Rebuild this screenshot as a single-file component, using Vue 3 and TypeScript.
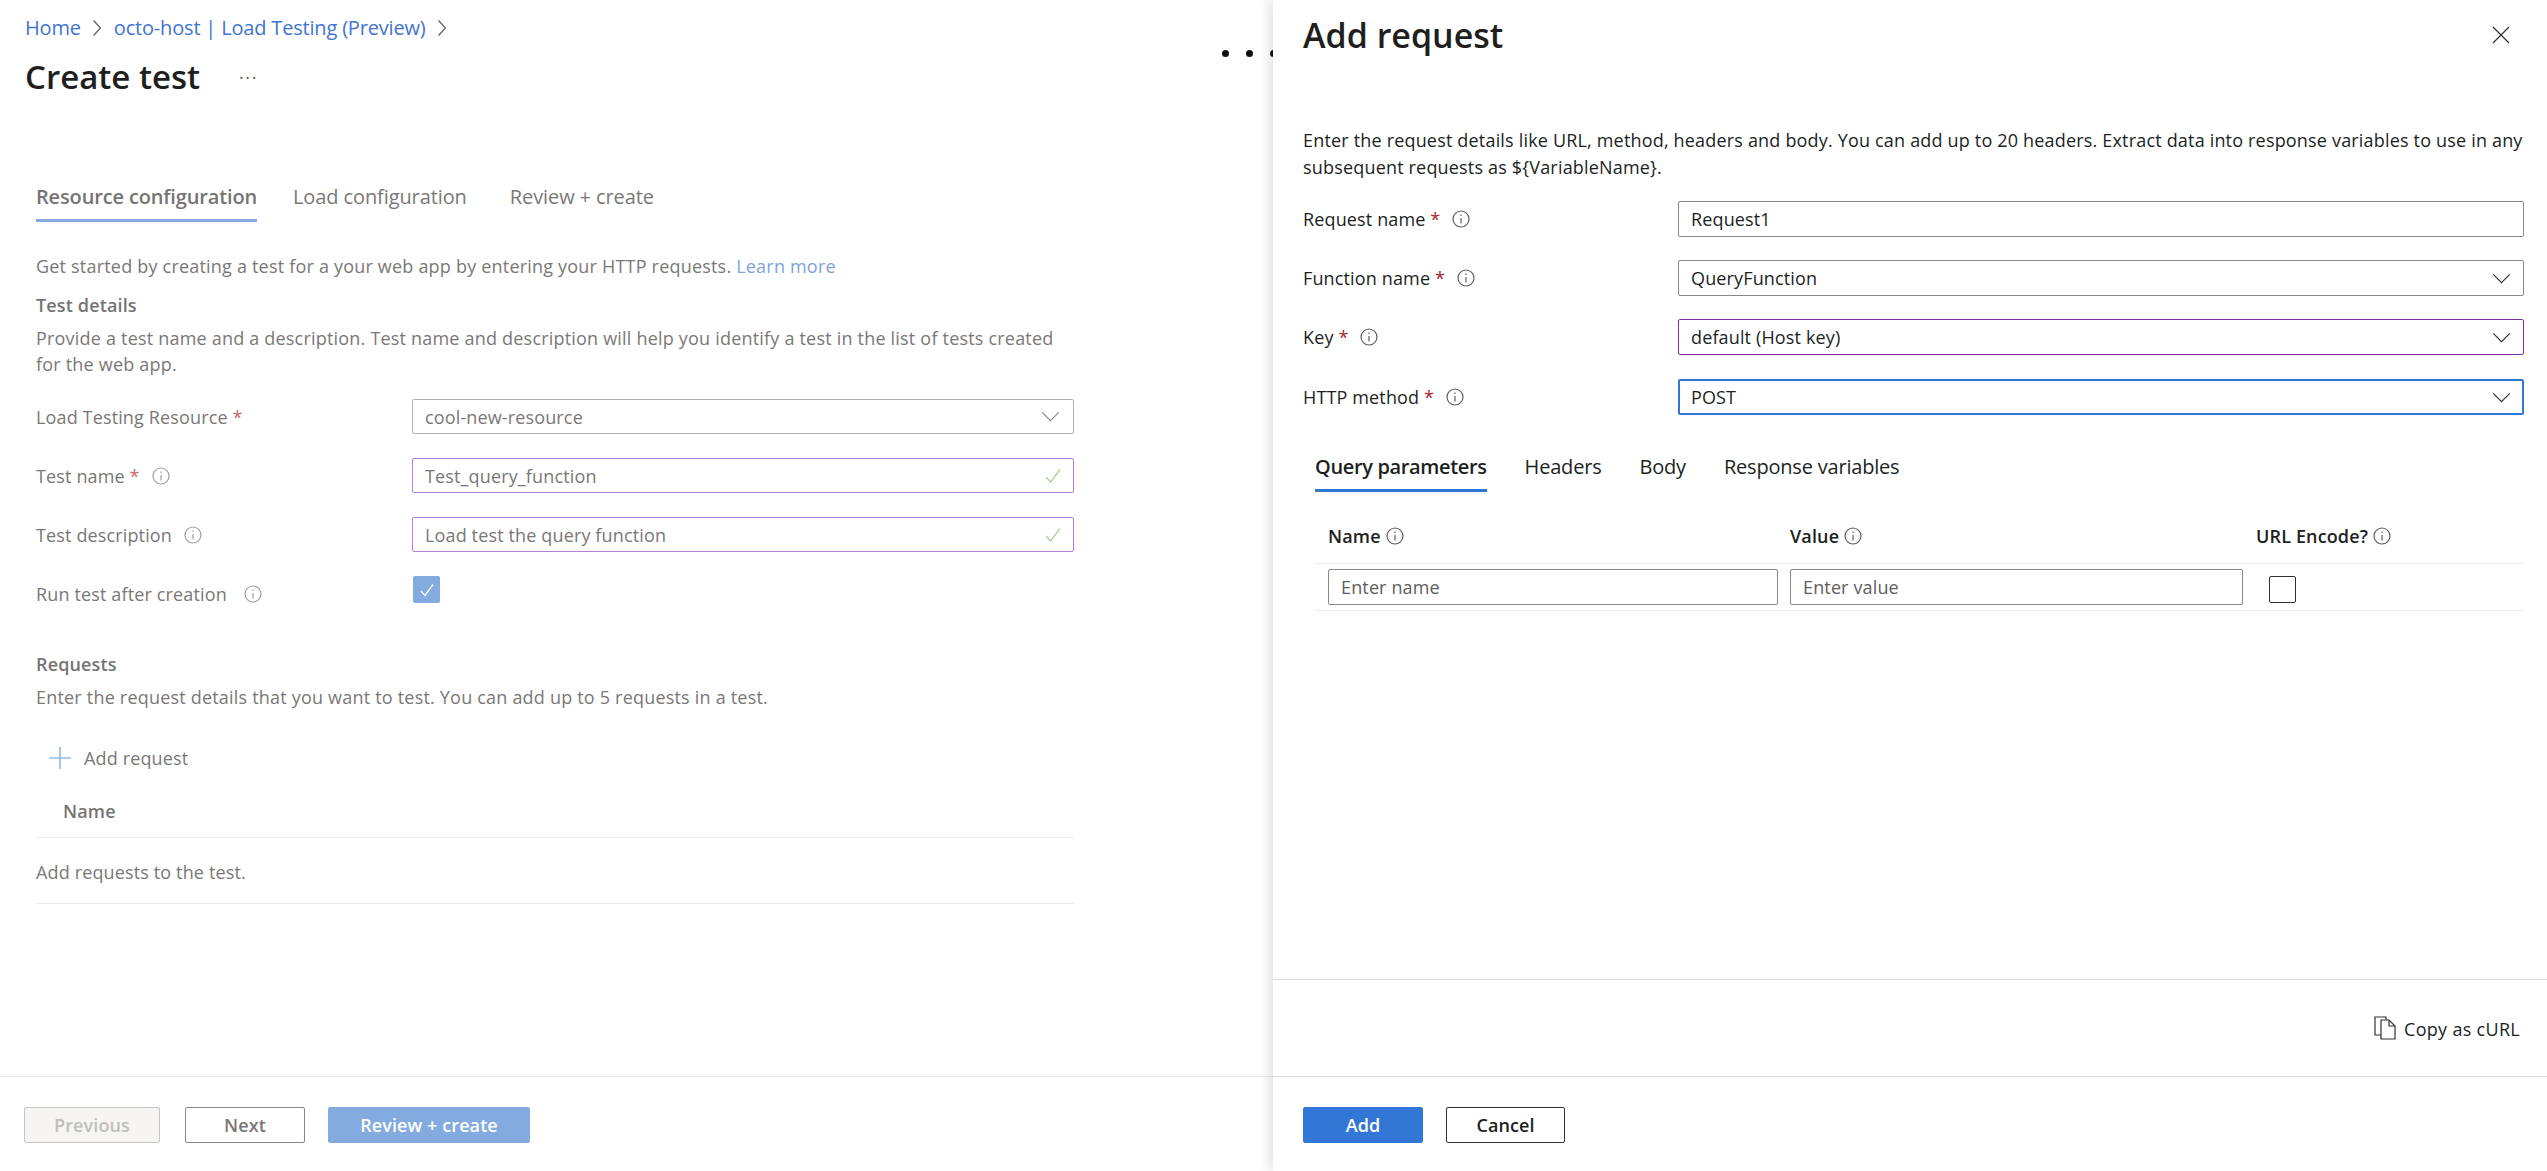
<script setup lang="ts">
interface LeftField { label: string; required?: boolean; info?: boolean; value: string; kind: 'select' | 'valid' }
interface RightField { label: string; value: string; state: string; select: boolean }

const leftFields: LeftField[] = [
  { label: 'Load Testing Resource', required: true, value: 'cool-new-resource', kind: 'select' },
  { label: 'Test name', required: true, info: true, value: 'Test_query_function', kind: 'valid' },
  { label: 'Test description', info: true, value: 'Load test the query function', kind: 'valid' },
]
const rightFields: RightField[] = [
  { label: 'Request name', value: 'Request1', state: '', select: false },
  { label: 'Function name', value: 'QueryFunction', state: '', select: true },
  { label: 'Key', value: 'default (Host key)', state: 'dirty', select: true },
  { label: 'HTTP method', value: 'POST', state: 'focus', select: true },
]
const subTabs = ['Headers', 'Body', 'Response variables']
</script>

<template>
  <div class="page">
    <section class="left">
      <nav class="crumbs">
        <a>Home</a>
        <svg class="crumb-chev" viewBox="0 0 10 18"><path d="M1.5 1.5 8.5 9l-7 7.5" /></svg>
        <a>octo-host | Load Testing (Preview)</a>
        <svg class="crumb-chev" viewBox="0 0 10 18"><path d="M1.5 1.5 8.5 9l-7 7.5" /></svg>
      </nav>
      <div class="title-row">
        <h1>Create test</h1>
        <span class="title-more">···</span>
      </div>
      <div class="left-tabs">
        <span class="ltab active">Resource configuration</span>
        <span class="ltab">Load configuration</span>
        <span class="ltab">Review + create</span>
      </div>
      <div class="left-body">
        <p class="intro">Get started by creating a test for a your web app by entering your HTTP requests. <a>Learn more</a></p>
        <h2 class="details-head">Test details</h2>
        <p class="desc">Provide a test name and a description. Test name and description will help you identify a test in the list of tests created<br />for the web app.</p>
        <div class="left-form">
          <div v-for="f in leftFields" :key="f.label" class="lrow">
            <label>{{ f.label }}<em v-if="f.required"> *</em>
              <svg v-if="f.info" class="info light" viewBox="0 0 18 18"><circle cx="9" cy="9" r="8" /><path d="M9 8v5.5M9 4.6v1.4" /></svg>
            </label>
            <div class="lbox" :class="f.kind">
              <span>{{ f.value }}</span>
              <svg v-if="f.kind === 'select'" class="chev" viewBox="0 0 20 12"><path d="M1 1.5 10 10.5l9-9" /></svg>
              <svg v-else class="tick" viewBox="0 0 20 20"><path d="M1.5 11.5 7 17.5 18.5 2" /></svg>
            </div>
          </div>
          <div class="lrow">
            <label>Run test after creation
              <svg class="info light" viewBox="0 0 18 18"><circle cx="9" cy="9" r="8" /><path d="M9 8v5.5M9 4.6v1.4" /></svg>
            </label>
            <span class="lcheck"><svg viewBox="0 0 18 18"><path d="M3 10l4 4.5L15 3.5" /></svg></span>
          </div>
        </div>
        <h2 class="req-head">Requests</h2>
        <p class="req-desc">Enter the request details that you want to test. You can add up to 5 requests in a test.</p>
        <div class="add-req">
          <svg viewBox="0 0 24 24"><path d="M12 1v22M1 12h22" /></svg>
          <span>Add request</span>
        </div>
        <div class="req-col">Name</div>
        <div class="req-empty">Add requests to the test.</div>
      </div>
      <footer class="left-foot">
        <button class="btn prev">Previous</button>
        <button class="btn next">Next</button>
        <button class="btn review">Review + create</button>
      </footer>
      <span class="dots" aria-hidden="true"><i></i><i></i><i></i></span>
    </section>

    <aside class="panel">
      <header class="panel-head">
        <h1>Add request</h1>
        <svg class="close" viewBox="0 0 18 18"><path d="M1 1l16 16M17 1 1 17" /></svg>
      </header>
      <p class="panel-intro">Enter the request details like URL, method, headers and body. You can add up to 20 headers. Extract data into response variables to use in any<br />subsequent requests as ${VariableName}.</p>
      <div class="panel-form">
        <div v-for="f in rightFields" :key="f.label" class="rrow">
          <label>{{ f.label }}<em> *</em>
            <svg class="info" viewBox="0 0 18 18"><circle cx="9" cy="9" r="8" /><path d="M9 8v5.5M9 4.6v1.4" /></svg>
          </label>
          <div class="rbox" :class="f.state">
            <span>{{ f.value }}</span>
            <svg v-if="f.select" class="chev dark" viewBox="0 0 20 12"><path d="M1 1.5 10 10.5l9-9" /></svg>
          </div>
        </div>
      </div>
      <div class="sub-tabs">
        <span class="stab active">Query parameters</span>
        <span v-for="t in subTabs" :key="t" class="stab">{{ t }}</span>
      </div>
      <div class="grid-head">
        <span>Name <svg class="info" viewBox="0 0 18 18"><circle cx="9" cy="9" r="8" /><path d="M9 8v5.5M9 4.6v1.4" /></svg></span>
        <span>Value <svg class="info" viewBox="0 0 18 18"><circle cx="9" cy="9" r="8" /><path d="M9 8v5.5M9 4.6v1.4" /></svg></span>
        <span>URL Encode? <svg class="info" viewBox="0 0 18 18"><circle cx="9" cy="9" r="8" /><path d="M9 8v5.5M9 4.6v1.4" /></svg></span>
      </div>
      <div class="grid-row">
        <div class="rbox ph">Enter name</div>
        <div class="rbox ph">Enter value</div>
        <span class="rcheck"></span>
      </div>
      <div class="copy-row">
        <svg viewBox="0 0 22 24">
          <path d="M7 19H1V1h11v3" />
          <path d="M7 4h8l6 6v13H7z" />
          <path d="M15 4v6h6" />
        </svg>
        <span>Copy as cURL</span>
      </div>
      <footer class="panel-foot">
        <button class="btn add">Add</button>
        <button class="btn cancel">Cancel</button>
      </footer>
    </aside>
  </div>
</template>

<style>
html, body { margin: 0; padding: 0; background: #fff; }
</style>

<style scoped>
.page {
  display: flex;
  width: 2547px;
  height: 1171px;
  overflow: hidden;
  background: #fff;
  font-family: "Open Sans", "Noto Sans", sans-serif;
  font-size: 18px;
  letter-spacing: 0.14px;
  color: #201f1e;
}
h1, h2, p { margin: 0; }
p { letter-spacing: 0.2px; }
em { font-style: normal; color: #a4262c; }
svg { fill: none; stroke: currentColor; flex: none; }

/* ---- left blade ---- */
.left {
  position: relative;
  width: 1273px;
  flex: none;
  display: flex;
  flex-direction: column;
  color: #7a7876;
}
.crumbs {
  display: flex;
  align-items: center;
  padding: 14px 0 0 25px;
  height: 28px;
  line-height: 28px;
  font-size: 20px;
  letter-spacing: -0.18px;
  color: #3f74d2;
}
.crumb-chev { width: 10px; height: 18px; margin: 0 12px 0 11px; color: #605e5c; stroke-width: 1.2; }
.title-row {
  display: flex;
  align-items: center;
  margin: 13px 0 0 25px;
  height: 44px;
}
.title-row h1 { font-size: 33px; font-weight: 600; color: #201f1e; line-height: 44px; width: 214px; letter-spacing: 0; }
.title-more { font-size: 18px; color: #605e5c; line-height: 44px; letter-spacing: 1.6px; }
.left-tabs {
  display: flex;
  margin: 76px 0 0 36px;
  gap: 36px;
  font-size: 20px;
  letter-spacing: -0.1px;
}
.ltab { line-height: 44px; height: 47px; box-sizing: border-box; margin-right: 7px; }
.ltab.active { font-weight: 600; letter-spacing: -0.15px; border-bottom: 3px solid #83abe0; color: #767472; margin-right: 0; }
.left-body { padding: 0 0 0 36px; width: 1038px; }
.intro { line-height: 26px; margin-top: 31px; }
.intro a { color: #7ea3dc; }
.details-head, .req-head { font-size: 18px; font-weight: 600; line-height: 26px; color: #767472; }
.details-head { margin-top: 13px; }
.desc { margin-top: 7px; line-height: 26px; }
.left-form { margin-top: 22px; display: flex; flex-direction: column; gap: 24px; }
.lrow { display: grid; grid-template-columns: 376px 662px; height: 35px; align-items: center; }
.lrow label { display: flex; align-items: center; white-space: pre; }
.lrow em { color: #c8676b; }
.info { width: 18px; height: 18px; margin-left: 12px; color: #605e5c; stroke-width: 1.2; }
.info.light { color: #a19f9d; }
.lbox {
  box-sizing: border-box;
  height: 35px;
  display: flex;
  align-items: center;
  justify-content: space-between;
  padding: 0 13px 0 12px;
  border: 1px solid #b3b0ad;
  border-radius: 2px;
  color: #7a7876;
}
.lbox.valid { border-color: #b47fd2; }
.chev { width: 19px; height: 11px; color: #8a8886; stroke-width: 1.3; }
.chev.dark { color: #323130; }
.tick { width: 16px; height: 18px; color: #9ccc8b; stroke-width: 1.5; margin-right: -1px; }
.lcheck {
  width: 27px;
  height: 27px;
  margin: -8px 0 0 1px;
  border-radius: 2px;
  background: #83abe0;
  color: #fff;
  display: flex;
  align-items: center;
  justify-content: center;
}
.lcheck svg { width: 18px; height: 18px; stroke-width: 1.3; }
.req-head { margin-top: 40px; }
.req-desc { margin-top: 7px; line-height: 26px; }
.add-req {
  display: flex;
  align-items: center;
  margin-top: 28px;
  height: 40px;
  padding-left: 12px;
}
.add-req svg { width: 24px; height: 24px; color: #93b8e8; stroke-width: 1.6; margin-right: 12px; }
.req-col {
  margin-top: 7px;
  height: 52px;
  line-height: 52px;
  padding-left: 27px;
  font-weight: 600;
  font-size: 18px;
  color: #767472;
  border-bottom: 1px solid #eeedec;
}
.req-empty { padding: 21px 0 18px; line-height: 26px; border-bottom: 1px solid #eeedec; }
.left-foot {
  margin-top: auto;
  height: 95px;
  box-sizing: border-box;
  border-top: 1px solid #e9e8e7;
  padding: 30px 0 0 24px;
  display: flex;
  gap: 24px;
  align-items: flex-start;
}
.btn {
  box-sizing: border-box;
  height: 36px;
  border-radius: 2px;
  font: inherit;
  font-weight: 600;
  letter-spacing: 0.1px;
  padding: 0;
  background: #fff;
}
.prev { width: 136px; background: #f6f5f4; border: 1px solid #c8c6c4; color: #c0bebc; }
.next { width: 120px; border: 1px solid #8a8886; color: #7a7876; margin-left: 1px; }
.review { width: 202px; background: #83abe0; border: 1px solid #83abe0; color: #fff; margin-left: -1px; }
.dots {
  position: absolute;
  top: 50px;
  left: 1222px;
  display: flex;
  gap: 17px;
}
.dots i { width: 7px; height: 7px; border-radius: 50%; background: #111; }

/* ---- right panel ---- */
.panel {
  position: relative;
  flex: 1;
  min-width: 0;
  display: flex;
  flex-direction: column;
  background: #fff;
  box-shadow: -5px 0 10px rgba(0, 0, 0, 0.1);
  padding-left: 30px;
}
.panel-head {
  display: flex;
  justify-content: space-between;
  align-items: center;
  padding-top: 13px;
  padding-right: 37px;
  height: 44px;
}
.panel-head h1 { font-size: 34px; font-weight: 600; line-height: 44px; letter-spacing: 0; }
.close { width: 18px; height: 18px; color: #323130; stroke-width: 1.2; }
.panel-intro { margin-top: 70px; line-height: 27px; white-space: nowrap; letter-spacing: 0.18px; }
.panel-form { margin-top: 20px; display: flex; flex-direction: column; gap: 23px; }
.rrow { display: grid; grid-template-columns: 375px 846px; height: 36px; align-items: center; }
.rrow:last-child { margin-top: 1px; }
.rrow label { display: flex; align-items: center; white-space: pre; }
.rbox {
  box-sizing: border-box;
  height: 36px;
  display: flex;
  align-items: center;
  justify-content: space-between;
  padding: 0 12px 0 12px;
  border: 1px solid #8a8886;
  border-radius: 2px;
}
.rbox.dirty { border-color: #7f2f9e; }
.rbox.focus { border: 2px solid #3277d5; padding: 0 11px; }
.rbox.ph { color: #605e5c; }
.sub-tabs { display: flex; margin: 30px 0 0 12px; gap: 38px; font-size: 20px; letter-spacing: -0.2px; }
.stab { line-height: 44px; height: 47px; box-sizing: border-box; }
.stab.active { font-weight: 600; letter-spacing: -0.35px; border-bottom: 3px solid #3277d5; }
.grid-head {
  display: grid;
  grid-template-columns: 462px 466px 1fr;
  margin: 17px 23px 0 12px;
  padding-left: 13px;
  height: 55px;
  box-sizing: border-box;
  align-items: center;
  border-bottom: 1px solid #edebe9;
  font-weight: 600;
}
.grid-head span { display: flex; align-items: center; }
.grid-head .info { margin-left: 5px; }
.grid-row {
  display: grid;
  grid-template-columns: 450px 453px 1fr;
  column-gap: 12px;
  margin: 0 23px 0 12px;
  padding: 5px 0 6px 13px;
  height: 47px;
  box-sizing: border-box;
  border-bottom: 1px solid #edebe9;
}
.rcheck {
  width: 27px;
  height: 27px;
  box-sizing: border-box;
  margin: 7px 0 0 14px;
  border: 1px solid #323130;
  border-radius: 2px;
}
.copy-row {
  margin-top: auto;
  height: 97px;
  box-sizing: border-box;
  border-top: 1px solid #e1dfdd;
  margin-left: -30px;
  padding: 36px 27px 0 0;
  display: flex;
  justify-content: flex-end;
  align-items: flex-start;
}
.copy-row svg { width: 22px; height: 24px; color: #323130; stroke-width: 1.2; margin-right: 8px; }
.copy-row span { line-height: 26px; letter-spacing: 0.3px; }
.panel-foot {
  height: 95px;
  box-sizing: border-box;
  border-top: 1px solid #e1dfdd;
  margin-left: -30px;
  padding: 30px 0 0 30px;
  display: flex;
  gap: 23px;
  align-items: flex-start;
}
.add { width: 120px; background: #3277d5; border: 1px solid #3277d5; color: #fff; }
.cancel { width: 119px; border: 1px solid #323130; color: #201f1e; }
</style>
